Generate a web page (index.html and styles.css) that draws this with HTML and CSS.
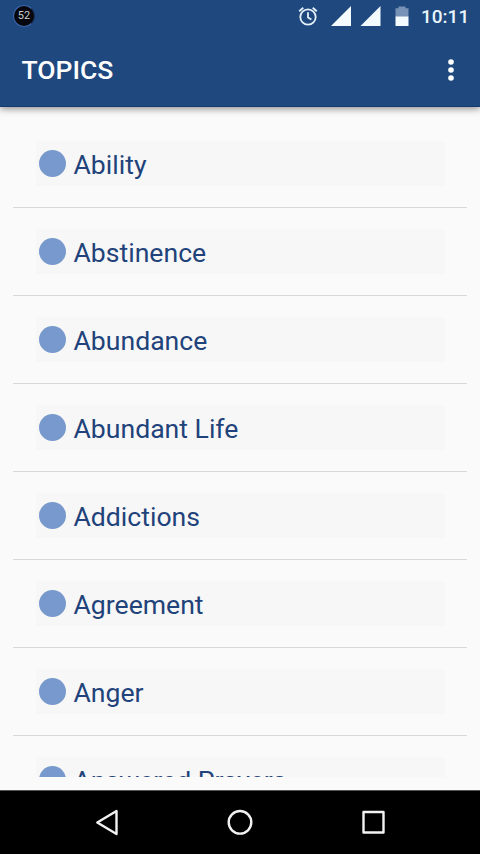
FILE: index.html
```html
<!DOCTYPE html>
<html lang="en">
<head>
<meta charset="utf-8">
<title>Topics</title>
<link rel="stylesheet" href="styles.css">
</head>
<body>
<div class="screen">
  <header class="top">
    <div class="status">
      <span class="badge">52</span>
      <svg class="status-icons" width="112" height="32" viewBox="0 0 112 32" fill="#f4fbff">
        <g fill="none" stroke="#e4f1fa" stroke-width="1.8">
          <circle cx="10" cy="17" r="7.7"/>
          <path d="M10 12.2v5.2l3.4 2.2M1.2 11.2l4.1-3.5M18.8 11.2l-4.1-3.5"/>
        </g>
        <path d="M53 6v20H33zM82.500 6v20h-20z"/>
        <path d="M97.500 8.300h3V6.500h7v1.800h3V17h-13z" fill="#7792b5"/>
        <path d="M97.500 16.500h13V26h-13z"/>
      </svg>
      <time class="clock">10:11</time>
    </div>
    <div class="bar">
      <h1 class="title">TOPICS</h1>
      <svg class="more" width="8" height="24" viewBox="0 0 8 24" fill="#fff">
        <circle cx="4" cy="4" r="2.8"/><circle cx="4" cy="12" r="2.8"/><circle cx="4" cy="20" r="2.8"/>
      </svg>
    </div>
  </header>
  <main class="content">
    <ul class="list">
      <li class="row"><div class="item"><span class="dot"></span><span class="label">Ability</span></div></li>
      <li class="row"><div class="item"><span class="dot"></span><span class="label">Abstinence</span></div></li>
      <li class="row"><div class="item"><span class="dot"></span><span class="label">Abundance</span></div></li>
      <li class="row"><div class="item"><span class="dot"></span><span class="label">Abundant Life</span></div></li>
      <li class="row"><div class="item"><span class="dot"></span><span class="label">Addictions</span></div></li>
      <li class="row"><div class="item"><span class="dot"></span><span class="label">Agreement</span></div></li>
      <li class="row"><div class="item"><span class="dot"></span><span class="label">Anger</span></div></li>
      <li class="row"><div class="item"><span class="dot"></span><span class="label">Answered Prayers</span></div></li>
    </ul>
  </main>
  <nav class="nav">
    <svg width="300" height="32" viewBox="0 0 300 32" fill="none" stroke="#f2f2f2" stroke-width="2.4" stroke-linejoin="round">
      <path d="M26.500 5v23L7.300 16.500z"/>
      <circle cx="150" cy="16.300" r="11.300"/>
      <rect x="273.500" y="6" width="20" height="20.500"/>
    </svg>
  </nav>
</div>
</body>
</html>
```

FILE: styles.css
```css
* { box-sizing: border-box; }
body { margin: 0; font-family: Roboto, sans-serif; }
.screen {
  width: 480px;
  height: 854px;
  display: flex;
  flex-direction: column;
  overflow: hidden;
  background: #fafafa;
}
.top {
  height: 107px;
  flex: none;
  background: #1f487e;
  border-bottom: 1px solid #183a68;
  box-shadow: 0 2px 7px rgba(0, 0, 0, .42);
  color: #fff;
}
.status {
  height: 32px;
  display: flex;
  align-items: center;
  padding: 0 11px 0 13px;
}
.badge {
  width: 22px;
  height: 22px;
  border: 1.5px solid #3d64ad;
  border-right-color: #1b3157;
  border-radius: 50%;
  background: #05070c;
  color: #c8ccd2;
  font-size: 11px;
  line-height: 20px;
  text-align: center;
}
.status-icons { margin-left: auto; }
.clock {
  width: 48px;
  margin: 2px 0 0 11px;
  font-size: 19px;
  font-weight: 500;
  line-height: 30px;
  white-space: nowrap;
  color: #e9f4fc;
}
.bar {
  height: 74px;
  display: flex;
  align-items: center;
  justify-content: space-between;
  padding: 0 25.5px 0 21.5px;
}
.title {
  margin: 2px 0 0;
  font-size: 26.5px;
  font-weight: 500;
  line-height: 32px;
}
.more { margin-top: 1px; }
.content {
  flex: 1;
  min-height: 0;
  padding: 13px;
}
.list {
  height: 656.5px;
  margin: 0;
  padding: 0;
  overflow: hidden;
  list-style: none;
}
.row {
  height: 88px;
  padding: 21px 22px 0 23px;
  border-bottom: 1px solid #d9d9d9;
}
.item {
  height: 45px;
  display: flex;
  align-items: center;
  padding-left: 2.5px;
  background: #f7f7f7;
}
.dot {
  width: 27px;
  height: 27px;
  border-radius: 50%;
  background: #7799cd;
}
.label {
  margin: 2px 0 0 8px;
  font-size: 26.6px;
  line-height: 32px;
  color: #1f437a;
  white-space: nowrap;
}
.nav {
  height: 64px;
  flex: none;
  display: flex;
  align-items: center;
  justify-content: center;
  padding-bottom: 2px;
  background: #000;
  border-top: 1px solid #555;
}
```
